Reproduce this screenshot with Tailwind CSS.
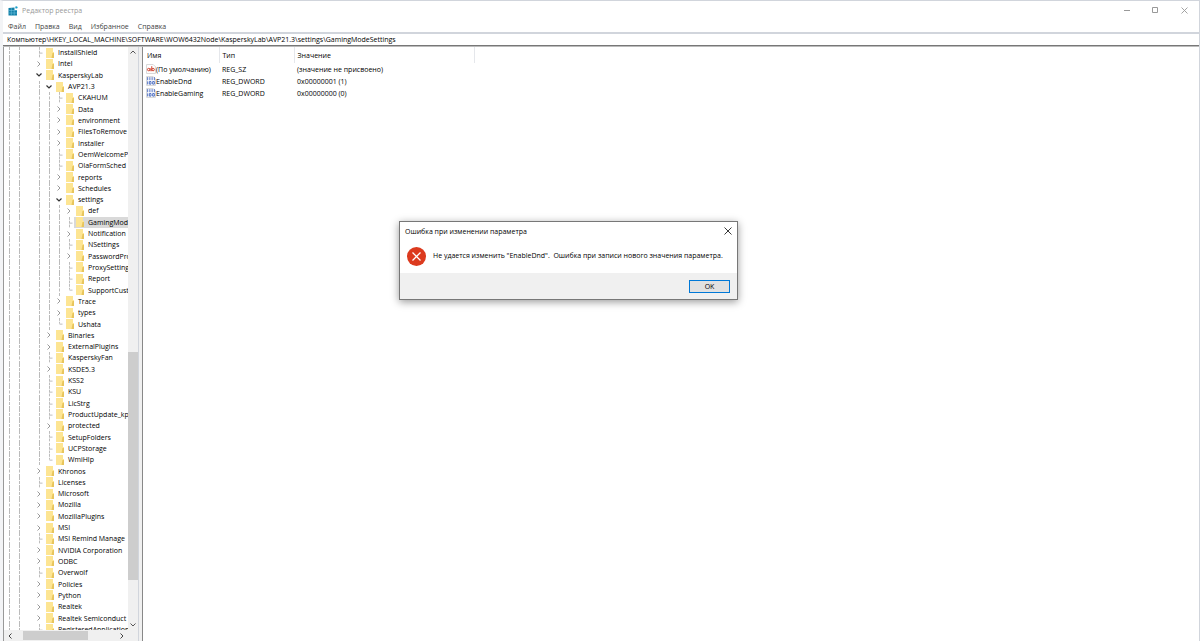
<!DOCTYPE html>
<html lang="ru">
  <head>
    <meta charset="UTF-8" />
    <meta name="viewport" content="width=device-width, initial-scale=1.0" />
    <script src="https://cdn.jsdelivr.net/npm/@tailwindcss/browser@4"></script>
    <title>Редактор реестра</title>
  </head>
  <body
    class="relative flex h-screen flex-col overflow-hidden border-t border-r border-l-3 border-t-gray-300 border-r-gray-300 border-l-gray-100 bg-white font-['Open_Sans','Noto_Sans',sans-serif] text-[7px] leading-[11px] text-black"
  >
    <header class="flex h-[19px] shrink-0 items-center justify-between pl-[5px]">
      <div class="flex items-center gap-1">
        <svg class="size-[10px]" viewBox="0 0 10 10">
          <path d="M.5 2l6-.5V4H9v5.500H.5z" fill="#1280a8" />
          <path d="M.5 4.500H9M.5 7H9M3.300 2v7.500M6.200 4v5.500" stroke="#7cc9e4" stroke-width=".5" />
          <path d="M7 .8l2-.6.8 1.800-2 .8z" fill="#1aa0cc" />
        </svg>
        <h1 class="text-[#999]">Редактор реестра</h1>
      </div>
      <div class="flex text-[#999]">
        <button class="flex w-7 justify-center" aria-label="Свернуть">
          <svg class="size-[7px]" viewBox="0 0 7 7"><path d="M0 3.500h6" stroke="currentColor" /></svg>
        </button>
        <button class="flex w-7 justify-center" aria-label="Развернуть">
          <svg class="size-[7px]" viewBox="0 0 7 7"><path d="M.5 .5h5v5h-5z" fill="none" stroke="currentColor" /></svg>
        </button>
        <button class="flex w-[30px] justify-center" aria-label="Закрыть">
          <svg class="size-[7px]" viewBox="0 0 7 7"><path d="M.5 .5l6 6m0-6l-6 6" stroke="currentColor" stroke-width=".9" /></svg>
        </button>
      </div>
    </header>

    <nav class="flex h-3 shrink-0 items-center gap-[9px] pl-[5px] text-[#444]">
      <button>Файл</button>
      <button>Правка</button>
      <button>Вид</button>
      <button>Избранное</button>
      <button>Справка</button>
    </nav>

    <input
      class="h-[14px] w-full shrink-0 border-t-2 border-b border-t-gray-300 border-b-[#777] pl-1 outline-none"
      aria-label="Путь"
      value="Компьютер\HKEY_LOCAL_MACHINE\SOFTWARE\WOW6432Node\KasperskyLab\AVP21.3\settings\GamingModeSettings"
    />

    <main class="flex min-h-0 flex-1 border-t border-[#bbb]">
      <aside class="flex w-[135px] shrink-0 flex-col border-l border-[#999]">
        <div class="flex min-h-0 flex-1">
          <div class="min-w-0 flex-1 overflow-hidden">
            <ul id="tree" class="grid h-[588px] auto-rows-fr"></ul>
          </div>
          <div class="flex w-[10px] flex-col items-center bg-[#f0f0f0]">
            <svg class="my-[3px] h-1 w-[6px] shrink-0" viewBox="0 0 6 4"><path d="M.5 3.500L3 1l2.500 2.500" fill="none" stroke="#555" /></svg>
            <div class="flex-[295]"></div>
            <div class="w-full flex-[228] bg-[#cdcdcd]"></div>
            <div class="flex-[40]"></div>
            <svg class="my-[3px] h-1 w-[6px] shrink-0" viewBox="0 0 6 4"><path d="M.5 .5L3 3 5.500 .5" fill="none" stroke="#555" /></svg>
          </div>
        </div>
        <div class="flex h-[11px] shrink-0 items-center bg-[#f0f0f0]">
          <div class="flex flex-1 items-center">
            <svg class="mx-1 h-[6px] w-1" viewBox="0 0 4 6"><path d="M3.500 .5L1 3l2.500 2.500" fill="none" stroke="#444" /></svg>
            <div class="w-[7px]"></div>
            <div class="h-[9px] w-[65px] bg-[#cdcdcd]"></div>
            <div class="flex-1"></div>
            <svg class="mx-1 h-[6px] w-1" viewBox="0 0 4 6"><path d="M.5 .5L3 3 .5 5.500" fill="none" stroke="#444" /></svg>
          </div>
          <div class="w-[10px]"></div>
        </div>
      </aside>
      <div class="w-[5px] shrink-0 border-r border-l border-r-[#888] border-l-gray-300 bg-[#f0f0f0]"></div>

      <section class="min-w-0 flex-1 pl-[3px]">
        <table class="table-fixed border-collapse text-left">
          <thead>
            <tr class="h-4">
              <th class="w-[73px] border-r border-gray-200 p-0 pl-px font-normal">Имя</th>
              <th class="w-[75px] border-r border-gray-200 p-0 pl-[3px] font-normal">Тип</th>
              <th class="w-[180px] border-r border-gray-200 p-0 pl-[3px] font-normal">Значение</th>
            </tr>
          </thead>
          <tbody id="values"></tbody>
        </table>
      </section>
    </main>

    <div
      class="absolute top-[220px] left-[396px] w-[339px] border border-[#777] bg-white shadow-[0_2px_8px_rgba(0,0,0,0.4)]"
      role="alertdialog"
      aria-labelledby="error-title"
      aria-describedby="error-text"
    >
      <div class="flex h-[18px] items-center justify-between pr-[5px] pl-[5px]">
        <h2 id="error-title">Ошибка при изменении параметра</h2>
        <button aria-label="Закрыть">
          <svg class="size-2" viewBox="0 0 8 8"><path d="M.5 .5l7 7m0-7l-7 7" stroke="#222" stroke-width=".9" /></svg>
        </button>
      </div>
      <div class="flex h-[33px] items-start gap-[7px] pt-[7px] pl-[7px]">
        <svg class="size-[19px] shrink-0" viewBox="0 0 19 19">
          <circle cx="9.500" cy="9.500" r="9.500" fill="#dc3a1e" />
          <path d="M5.500 5.500l8 8m0-8l-8 8" stroke="#fff" stroke-width="1.300" />
        </svg>
        <p id="error-text" class="pt-[3px] whitespace-pre">Не удается изменить "EnableDnd".  Ошибка при записи нового значения параметра.</p>
      </div>
      <div class="flex h-[26px] items-center justify-end bg-[#f0f0f0] pr-[7px]">
        <button class="h-[13px] w-[41px] border border-[#0078d7] bg-[#e1e1e1] leading-none">OK</button>
      </div>
    </div>

    <script>
      // [depth, name, state]: "+" closed, "-" open, "" no children, "end" last leaf of its branch
      const keys = [
        [0, "InstallShield", ""],
        [0, "Intel", "+"],
        [0, "KasperskyLab", "-"],
        [1, "AVP21.3", "-"],
        [2, "CKAHUM", ""],
        [2, "Data", "+"],
        [2, "environment", "+"],
        [2, "FilesToRemove", "+"],
        [2, "Installer", "+"],
        [2, "OemWelcomeP", ""],
        [2, "OlaFormSched", ""],
        [2, "reports", "+"],
        [2, "Schedules", "+"],
        [2, "settings", "-"],
        [3, "def", "+"],
        [3, "GamingMode", ""],
        [3, "Notification", "+"],
        [3, "NSettings", ""],
        [3, "PasswordPro", "+"],
        [3, "ProxySetting", ""],
        [3, "Report", ""],
        [3, "SupportCust", "end"],
        [2, "Trace", "+"],
        [2, "types", "+"],
        [2, "Ushata", "end"],
        [1, "Binaries", "+"],
        [1, "ExternalPlugins", "+"],
        [1, "KasperskyFan", ""],
        [1, "KSDE5.3", "+"],
        [1, "KSS2", ""],
        [1, "KSU", ""],
        [1, "LicStrg", ""],
        [1, "ProductUpdate_kp", ""],
        [1, "protected", "+"],
        [1, "SetupFolders", ""],
        [1, "UCPStorage", ""],
        [1, "WmiHlp", "end"],
        [0, "Khronos", "+"],
        [0, "Licenses", ""],
        [0, "Microsoft", "+"],
        [0, "Mozilla", "+"],
        [0, "MozillaPlugins", "+"],
        [0, "MSI", "+"],
        [0, "MSI Remind Manage", ""],
        [0, "NVIDIA Corporation", "+"],
        [0, "ODBC", "+"],
        [0, "Overwolf", ""],
        [0, "Policies", "+"],
        [0, "Python", "+"],
        [0, "Realtek", "+"],
        [0, "Realtek Semiconduct", "+"],
        [0, "RegisteredApplication", ""],
      ];
      const selected = "GamingMode";

      const values = [
        ["(По умолчанию)", "REG_SZ", "(значение не присвоено)"],
        ["EnableDnd", "REG_DWORD", "0x00000001 (1)"],
        ["EnableGaming", "REG_DWORD", "0x00000000 (0)"],
      ];

      const guide = `<span class="flex w-[10px] shrink-0 justify-center"><i class="w-px border-l border-dashed border-[#bbb]"></i></span>`;
      const blank = `<span class="w-[10px] shrink-0"></span>`;
      const folder = `<svg class="h-[10px] w-2 shrink-0" viewBox="0 0 8 10"><path d="M0 0h7v4h1v6H0z" fill="#fde593"/><path d="M6.500 5H8v5H5.500z" fill="#e8c55c"/></svg>`;

      const marker = (state) => {
        if (state === "+")
          return `<button class="flex w-[10px] shrink-0 items-center justify-center" aria-label="Развернуть"><svg class="h-[6px] w-1" viewBox="0 0 4 6"><path d="M.5 .5L3 3 .5 5.500" fill="none" stroke="#999"/></svg></button>`;
        if (state === "-")
          return `<button class="flex w-[10px] shrink-0 items-center justify-center" aria-label="Свернуть"><svg class="h-1 w-[6px]" viewBox="0 0 6 4"><path d="M.5 .5L3 3 5.500 .5" fill="none" stroke="#333" stroke-width="1.200"/></svg></button>`;
        const line = state === "end" ? "M5.500 0v6" : "M5.500 0v12";
        return `<svg class="h-full w-[10px] shrink-0" viewBox="0 0 10 12" preserveAspectRatio="none"><path d="${line}M5.500 6.500h4" fill="none" stroke="#bbb" stroke-dasharray="3 1"/></svg>`;
      };

      document.querySelector("#tree").innerHTML = keys
        .map(
          ([depth, name, state]) => `
        <li class="flex min-h-0 whitespace-nowrap">
          ${guide}${guide}${blank}${guide.repeat(depth)}${marker(state)}
          <span class="flex shrink-0 items-center ${name === selected ? "bg-[#d9d9d9]" : ""}">
            <span class="flex w-[13px] pl-[2px]">${folder}</span>
            <span class="pl-px">${name}</span>
          </span>
        </li>`
        )
        .join("");

      const textIcon = `<svg class="size-[10px] shrink-0" viewBox="0 0 9 9"><path d="M.5 .5h6l2 2v6h-8z" fill="#fff" stroke="#ccc" stroke-width=".7"/><g fill="none" stroke="#d1402c" stroke-width=".9"><circle cx="2.400" cy="5" r="1.100"/><path d="M3.700 3.700v2.800M5.200 2v4.500"/><circle cx="6.400" cy="5" r="1.100"/></g></svg>`;
      const binaryIcon = `<svg class="size-[10px] shrink-0" viewBox="0 0 9 9"><path d="M.5 .5h6l2 2v6h-8z" fill="#fff" stroke="#ccc" stroke-width=".7"/><g fill="none" stroke="#3d62bd" stroke-width=".8"><path d="M1.500 1v2.800M3.500 1v2.800M5.500 1v2.800M7.500 1v2.800"/><path d="M1.500 4.800v2.800M3 5h1.500v2.300H3zM6 5h1.500v2.300H6z"/></g></svg>`;

      document.querySelector("#values").innerHTML = values
        .map(
          ([name, type, data]) => `
        <tr class="h-3">
          <td class="p-0"><span class="flex items-center whitespace-nowrap">${type === "REG_SZ" ? textIcon : binaryIcon}${name}</span></td>
          <td class="p-0 pl-[3px]">${type}</td>
          <td class="p-0 pl-[3px]">${data}</td>
        </tr>`
        )
        .join("");
    </script>
  </body>
</html>
